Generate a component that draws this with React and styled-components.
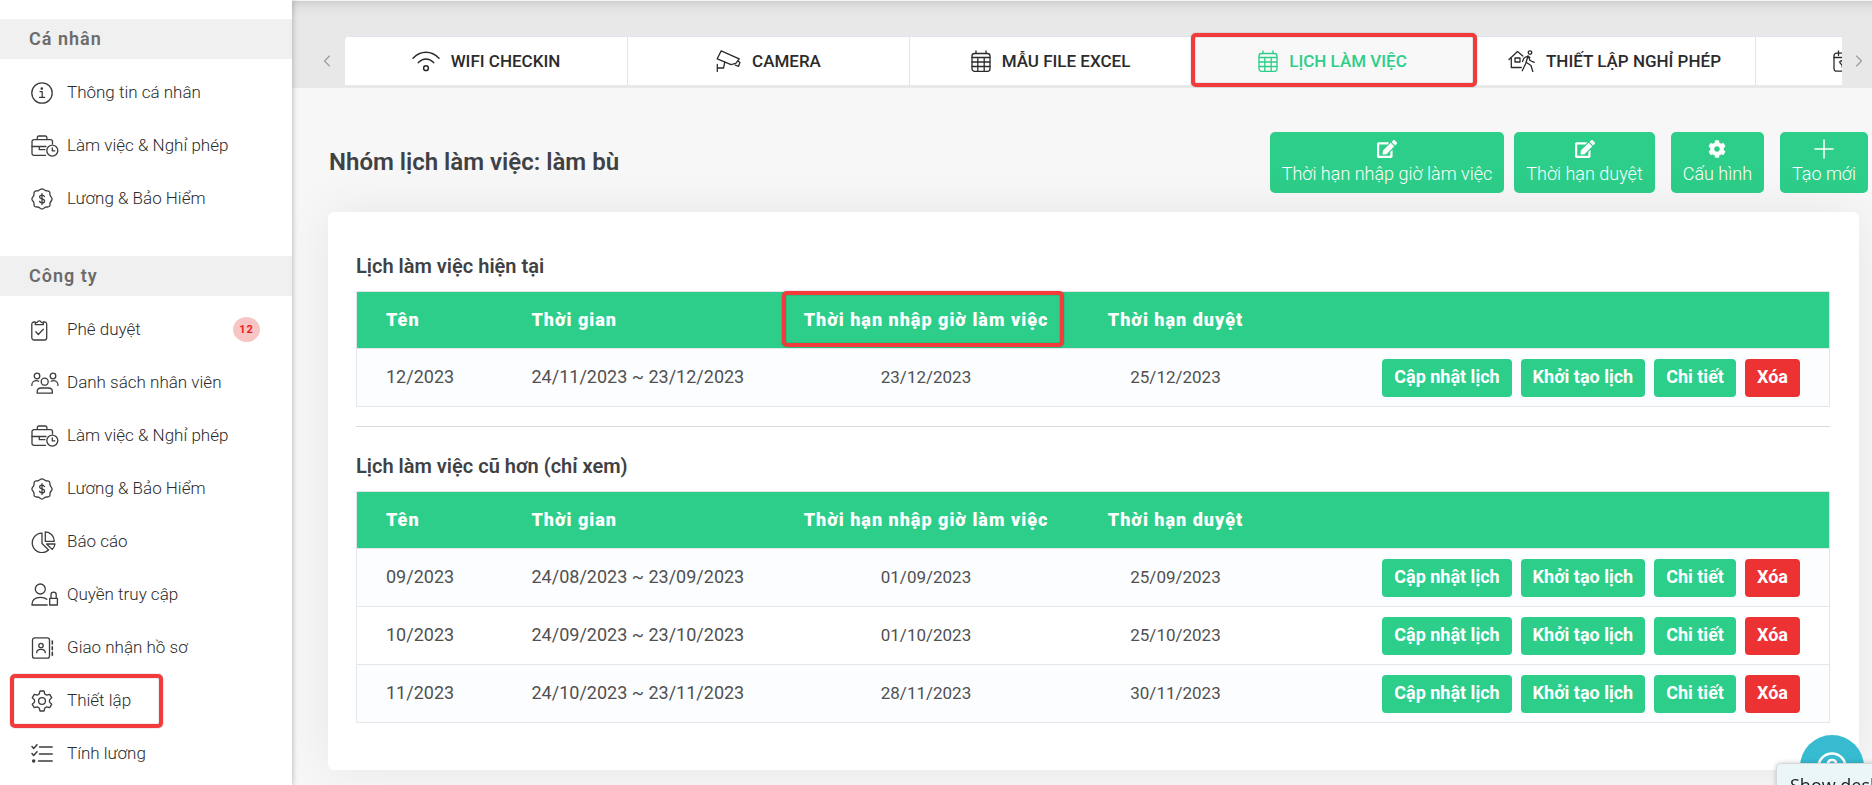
import React from "react";
import styled, { createGlobalStyle, css } from "styled-components";
import { FaEdit, FaCog } from "react-icons/fa";

const colors = {
  green: "#2dce89",
  red: "#ec3232",
  mark: "#f43b3b",
  line: "#e4e6eb",
  text: "#3f4144",
};

const GlobalStyle = createGlobalStyle`
  *, *::before, *::after { box-sizing: border-box; }
  body {
    margin: 0;
    overflow: hidden;
    background: #f7f7f7;
    color: ${colors.text};
    font-family: Roboto, "Liberation Sans", sans-serif;
  }
  button { font-family: inherit; cursor: pointer; }
`;

const frame = css`
  position: absolute;
  border: 4px solid ${colors.mark};
  border-radius: 5px;
  box-shadow: 0 0 1px rgba(0, 0, 0, 0.7), inset 0 0 1px rgba(0, 0, 0, 0.7);
  pointer-events: none;
  z-index: 2;
`;

// red frame around the element the guide points at
const marked = css`
  position: relative;
  &::after {
    content: "";
    inset: ${(props) => props.$inset || "-1px"};
    ${frame}
  }
`;

const Page = styled.div`
  display: flex;
  height: 100vh;
  overflow: hidden;
`;

const Sidebar = styled.nav`
  flex: 0 0 292px;
  position: relative;
  z-index: 1;
  padding-top: 19px;
  background: #fff;
  box-shadow: 0 0 6px rgba(0, 0, 0, 0.3);
`;

const Section = styled.section`
  margin-bottom: 31px;
`;

const SectionTitle = styled.h2`
  margin: 0 0 7px;
  padding: 0 29px;
  background: #f0f0f0;
  color: #6b6b6b;
  font-size: 18px;
  font-weight: 600;
  line-height: 40px;
  letter-spacing: 1px;
`;

const MenuLink = styled.a`
  display: flex;
  align-items: center;
  gap: 8px;
  height: 53px;
  padding: 0 32px 0 31px;
  color: #2b2b2b;
  font-size: 17px;
  font-weight: 300;
  text-decoration: none;
  ${(props) => props.$marked && marked}
`;

const MenuLabel = styled.span`
  padding-bottom: 2px;
`;

const IconSlot = styled.span`
  display: flex;
  flex: 0 0 28px;
  color: #3c3c3c;
`;

const Badge = styled.span`
  display: flex;
  align-items: center;
  justify-content: center;
  width: 27px;
  height: 25px;
  margin-left: auto;
  border-radius: 50%;
  background: #f8c5c5;
  color: #e81e1e;
  font-size: 11px;
  font-weight: 700;
  letter-spacing: 1px;
`;

const Main = styled.main`
  flex: 1;
  min-width: 0;
`;

const TabBar = styled.div`
  position: relative;
  display: flex;
  padding: 35px 0 3px 17px;
  border-top: 1px solid #f1f3f2;
  background: linear-gradient(#cfd1d0, #e1e1e1 7px, #e8e8e8 16px);
`;

const TabArrow = styled.button`
  display: flex;
  align-items: center;
  justify-content: center;
  flex: 0 0 ${(props) => props.$width};
  padding: ${(props) => props.$pad || "0"};
  border: 0;
  background: none;
  color: #999ca3;
`;

const TabList = styled.div`
  display: flex;
  flex: 1;
  min-width: 0;
  overflow: hidden;
  border-radius: 5px 0 0 0;
`;

const Tab = styled.button`
  display: flex;
  align-items: center;
  justify-content: ${(props) => (props.$iconOnly ? "flex-start" : "center")};
  gap: 11px;
  flex: 0 0 282px;
  height: 49px;
  padding: 0 0 0 ${(props) => (props.$iconOnly ? "77px" : "0")};
  border: 0;
  border-top: 1px solid #e0e4f0;
  background: ${(props) => (props.$active ? "#f8f8f8" : "#fff")};
  color: ${(props) => (props.$active ? colors.green : "#2b2b2b")};
  font-size: 17px;
  font-weight: 500;
  white-space: nowrap;

  & + & {
    border-left: 1px solid #e0e4f0;
  }
`;

const TabMark = styled.span`
  ${frame}
  top: 32px;
  left: 899px;
  width: 286px;
  height: 54px;
`;

const PageHead = styled.header`
  display: flex;
  align-items: center;
  justify-content: space-between;
  padding: 44px 4px 19px 37px;
`;

const PageTitle = styled.h1`
  margin: 0;
  padding-bottom: 2px;
  font-size: 24px;
  font-weight: 600;
  line-height: 32px;
`;

const Actions = styled.div`
  display: flex;
  gap: 16px;
`;

const ActionGroup = styled.div`
  display: flex;
  gap: 10px;
`;

const ActionButton = styled.button`
  display: flex;
  flex-direction: column;
  align-items: center;
  height: 61px;
  padding: 6px 12px 0;
  border: 0;
  border-radius: 5px;
  background: ${colors.green};
  color: #fff;
  font-size: 18px;
  font-weight: 300;
  line-height: 24px;
  white-space: nowrap;
`;

const ActionIcon = styled.span`
  display: flex;
  align-items: center;
  height: 22px;
  margin-bottom: 2px;
`;

const Card = styled.section`
  position: relative;
  margin: 0 13px 0 36px;
  padding: 42px 29px 47px 28px;
  border-radius: 6px;
  background: #fff;
  box-shadow: 0 0 50px rgba(0, 0, 0, 0.07);
`;

const GroupTitle = styled.h3`
  margin: 0 0 13px;
  font-size: 20px;
  font-weight: 600;
  line-height: 24px;
`;

const Divider = styled.hr`
  margin: 19px 0 27px;
  border: 0;
  border-top: 1px solid #dadada;
`;

const Table = styled.table`
  width: 100%;
  table-layout: fixed;
  border-collapse: collapse;
  border: 1px solid ${colors.line};
`;

const Col = styled.col`
  width: ${(props) => props.$width};
`;

const HeadCell = styled.th`
  height: 57px;
  padding: 0 0 2px ${(props) => props.$pad || "0"};
  background: ${colors.green};
  color: #fff;
  font-size: 18px;
  font-weight: 900;
  letter-spacing: 1px;
  text-align: ${(props) => props.$align || "left"};
  white-space: nowrap;
  ${(props) => props.$marked && marked}
`;

const Row = styled.tr`
  border-top: 1px solid ${colors.line};
  &:nth-child(odd) {
    background: #fcfdff;
  }
`;

const Cell = styled.td`
  height: 58px;
  padding: 0 0 2px ${(props) => props.$pad || "0"};
  color: #505050;
  font-size: ${(props) => (props.$align ? "17px" : "18px")};
  text-align: ${(props) => props.$align || "left"};
  white-space: nowrap;
`;

const ActionCell = styled.td`
  padding: 0 29px 0 0;
`;

const RowActions = styled.div`
  display: flex;
  justify-content: flex-end;
  gap: 9px;
`;

const RowButton = styled.button`
  height: 38px;
  padding: 0 12px 2px;
  border: 0;
  border-radius: 4px;
  background: ${(props) => (props.$danger ? colors.red : colors.green)};
  color: #fff;
  font-size: 18px;
  font-weight: 700;
`;

const HelpButton = styled.button`
  position: fixed;
  right: 8px;
  bottom: -14px;
  display: flex;
  align-items: center;
  justify-content: center;
  width: 64px;
  height: 64px;
  padding: 0;
  border: 0;
  border-radius: 50%;
  background: #36bbd1;
  color: #fff;
`;

const Tooltip = styled.div`
  position: fixed;
  left: calc(100% - 96px);
  top: calc(100% - 22px);
  padding: 8px 13px;
  border: 1px solid #d5d9da;
  border-radius: 5px;
  background: #eaf6f8;
  box-shadow: 0 0 5px rgba(0, 0, 0, 0.2);
  color: #1c1c1c;
  font-family: "Open Sans", "Noto Sans", sans-serif;
  font-size: 18px;
  line-height: 26px;
  white-space: nowrap;
`;

const Svg = ({ w = 22, h = 22, sw = 1.3, children }) => (
  <svg
    width={w}
    height={h}
    viewBox={`0 0 ${w} ${h}`}
    fill="none"
    stroke="currentColor"
    strokeWidth={sw}
    strokeLinecap="round"
    strokeLinejoin="round"
    aria-hidden="true"
  >
    {children}
  </svg>
);

const InfoIcon = () => (
  <Svg>
    <circle cx="11" cy="11" r="10.2" />
    <path d="M9 9.6h2.2v5.6M8.6 15.4h5" />
    <circle cx="10.8" cy="6.6" r="0.7" fill="currentColor" />
  </Svg>
);

const BriefcaseIcon = () => (
  <Svg w={28}>
    <path d="M14.5 20.4H3a2 2 0 0 1-2-2V6.6a2 2 0 0 1 2-2h16.5a2 2 0 0 1 2 2v2.2" />
    <path d="M6.3 4.4V2.5A1.5 1.5 0 0 1 7.8 1h6.6a1.5 1.5 0 0 1 1.5 1.5v1.9" />
    <path d="M1 11.5h14M8.3 11.7v3h5.5" />
    <circle cx="21.3" cy="15.6" r="5.5" />
    <path d="M21.3 12.8v3h2.5" />
  </Svg>
);

const MoneyIcon = () => (
  <Svg>
    <path d="M11 .9c1.5 0 2.3 1.4 3.6 1.8s2.9-.2 3.8.9.2 2.6.8 3.9S21.1 9.5 21.1 11s-1.4 2.3-1.9 3.5.2 2.9-.8 3.9-2.5.3-3.8.8S12.5 21.1 11 21.1s-2.3-1.4-3.6-1.9-2.8.2-3.8-.8-.3-2.6-.8-3.9S.9 12.5.9 11s1.4-2.2 1.9-3.5-.2-2.8.8-3.9 2.5-.5 3.8-.9S9.5.9 11 .9z" />
    <path d="M13.4 8.6c-.3-1-1.2-1.5-2.4-1.5-1.4 0-2.4.7-2.4 1.900 0 2.700 5 1.300 5 4 0 1.200-1.100 1.900-2.500 1.900-1.300 0-2.300-.6-2.600-1.600M11 5.600v10.800" />
  </Svg>
);

const ClipboardIcon = () => (
  <Svg w={17}>
    <path d="M4.3 3H3a2.2 2.2 0 0 0-2.2 2.2v13.6A2.2 2.2 0 0 0 3 21h10.5a2.2 2.2 0 0 0 2.2-2.2V5.2A2.2 2.2 0 0 0 13.500 3h-1.300" />
    <path d="M4.3 5.7V3.9l2-.6a2.1 2.1 0 0 1 4 0l2 .6v1.8z" />
    <path d="M4.8 12.8l2.5 2.7 5-5.2" />
  </Svg>
);

const TeamIcon = () => (
  <Svg w={28}>
    <circle cx="6" cy="4" r="2.8" />
    <circle cx="22" cy="4" r="2.8" />
    <circle cx="13.7" cy="9.7" r="3.5" />
    <path d="M.8 13.4c0-3 2-4.7 4.5-4.7.9 0 1.7.2 2.4.6M27 13.4c0-3-2-4.7-4.5-4.7-.9 0-1.7.2-2.4.6" />
    <path d="M6.2 21.2v-1.3c0-2.4 1.6-3.9 4-3.9h7.2c2.4 0 4 1.500 4 3.900v1.300z" />
  </Svg>
);

const PieIcon = () => (
  <Svg w={26}>
    <path d="M11 2.2A9.7 9.7 0 1 0 17.6 19L11 12.5z" />
    <path d="M14.3.9v9.400h9A9.300 9.300 0 0 0 14.300.9z" />
    <path d="M15.6 13h8.400a9 9 0 0 1-2.900 5.400z" />
  </Svg>
);

const UserLockIcon = () => (
  <Svg w={28} h={23}>
    <circle cx="9.3" cy="6" r="5" />
    <path d="M16.2 22H.9c0-5 3.5-7.7 8.6-7.7 2.7 0 4.9.7 6.3 2" />
    <path d="M18.7 15.3h7.7V22h-7.7zM20 15.2v-3.4a2.600 2.600 0 0 1 5.200 0v3.400" />
  </Svg>
);

const ContactIcon = () => (
  <Svg w={23}>
    <rect x="1.5" y=".9" width="17" height="20.2" rx="2.2" />
    <path d="M21.3 4v3M21.3 9.7v3M21.3 15.3v3" strokeWidth="1.6" />
    <circle cx="10" cy="8.5" r="2.2" />
    <path d="M5.7 15.7c0-2.3 1.4-3.3 4.3-3.3s4.3 1 4.3 3.300" />
  </Svg>
);

const GearIcon = () => (
  <Svg>
    <path d="M9 1h4l.8 3 1.9 1.1 3-.8 2 3.4-2.2 2.2v2.2l2.2 2.2-2 3.4-3-.8-1.9 1.1-.8 3H9l-.8-3-1.9-1.1-3 .8-2-3.4 2.2-2.2V9.9L1.3 7.7l2-3.4 3 .8L8.2 4z" />
    <circle cx="11" cy="11" r="3.4" />
  </Svg>
);

const ChecklistIcon = () => (
  <Svg sw={1.5}>
    <path d="M8.5 4h12.7M8.5 11h12.7M7.5 18h13.7M1 3.5l1.7 1.9L6 1.700M1 10.500l1.700 1.900L6 8.700" />
    <circle cx="2.7" cy="18" r="1" fill="currentColor" />
  </Svg>
);

const WifiIcon = () => (
  <Svg w={28} sw={1.5}>
    <path d="M1 8.2C8.5.3 19.5.3 27 8.2M6.3 12.6c4.7-4.8 10.7-4.8 15.4 0" />
    <circle cx="14" cy="18.2" r="2.4" />
  </Svg>
);

const CameraIcon = () => (
  <Svg w={25}>
    <path d="M5.2.9l18 8-3.4 4.5-4.7 1.2L1.2 8.8z" />
    <path d="M8.8 12.2L7.5 18H1.3M1.3 14.5v7M22 11.2l1.9 1.1-1.3 4-3.3-1.1" />
  </Svg>
);

const CalendarIcon = () => (
  <Svg w={20} sw={1.3}>
    <rect x="1" y="3.5" width="18" height="17.8" rx="2.5" />
    <path d="M5 .8v2.7M15 .8v2.7M1 7.5h18M1 12h18M1 16.5h18M6.8 7.5v13.5M13.2 7.5v13.5" />
  </Svg>
);

const HomeRunIcon = () => (
  <Svg w={27}>
    <path d="M1 9.5L9.5 1.6l5.3 4.5M3.3 8v9.5h10M7 8h5v4H7z" />
    <circle cx="22" cy="2.6" r="1.8" />
    <path d="M20 6l-4 2-1.5 3.5M20 6l-2.2 7.2-3.5 7.5M20.5 6.5l1.5 4 4.3 1.8M20 6l1.8 1.5M18.5 12.5l4.5 3 1.800 6" />
  </Svg>
);

const CalendarMoneyIcon = () => (
  <Svg w={22}>
    <rect x="1" y="3.2" width="19" height="18" rx="2.5" />
    <path d="M5.5.9v4.5M15.5.9v4.5M1 7.5h19M9.5 12.5c0-3-3.5-1.7-2.5.3s3 1.7 2 4" />
  </Svg>
);

const Chevron = ({ flip }) => (
  <Svg w={8} h={12} sw={1.1}>
    <path d={flip ? "M1.5 1l5 5-5 5" : "M6.5 1l-5 5 5 5"} />
  </Svg>
);

const PlusIcon = () => (
  <Svg w={20} h={20} sw={1.5}>
    <path d="M10 1v18M1 10h18" />
  </Svg>
);

const HelpIcon = () => (
  <Svg w={30} h={30} sw={2.5}>
    <circle cx="15" cy="15" r="13.5" />
    <path d="M11 11.5c.3-2.2 1.9-3.4 4-3.4 2.3 0 4 1.3 4 3.3 0 2.8-4 3-4 5.8M15 21v.5" />
  </Svg>
);

const personalMenu = [
  { icon: <InfoIcon />, label: "Thông tin cá nhân" },
  { icon: <BriefcaseIcon />, label: "Làm việc & Nghỉ phép" },
  { icon: <MoneyIcon />, label: "Lương & Bảo Hiểm" },
];

const companyMenu = [
  { icon: <ClipboardIcon />, label: "Phê duyệt", count: 12 },
  { icon: <TeamIcon />, label: "Danh sách nhân viên" },
  { icon: <BriefcaseIcon />, label: "Làm việc & Nghỉ phép" },
  { icon: <MoneyIcon />, label: "Lương & Bảo Hiểm" },
  { icon: <PieIcon />, label: "Báo cáo" },
  { icon: <UserLockIcon />, label: "Quyền truy cập" },
  { icon: <ContactIcon />, label: "Giao nhận hồ sơ" },
  { icon: <GearIcon />, label: "Thiết lập", marked: true },
  { icon: <ChecklistIcon />, label: "Tính lương" },
];

const tabs = [
  { id: "wifi", icon: <WifiIcon />, label: "WIFI CHECKIN" },
  { id: "camera", icon: <CameraIcon />, label: "CAMERA" },
  { id: "excel", icon: <CalendarIcon />, label: "MẪU FILE EXCEL" },
  {
    id: "schedule",
    icon: <CalendarIcon />,
    label: "LỊCH LÀM VIỆC",
    active: true,
  },
  { id: "leave", icon: <HomeRunIcon />, label: "THIẾT LẬP NGHỈ PHÉP" },
  { id: "more", icon: <CalendarMoneyIcon /> },
];

const currentRows = [
  {
    name: "12/2023",
    range: "24/11/2023 ~ 23/12/2023",
    input: "23/12/2023",
    approve: "25/12/2023",
  },
];

const olderRows = [
  {
    name: "09/2023",
    range: "24/08/2023 ~ 23/09/2023",
    input: "01/09/2023",
    approve: "25/09/2023",
  },
  {
    name: "10/2023",
    range: "24/09/2023 ~ 23/10/2023",
    input: "01/10/2023",
    approve: "25/10/2023",
  },
  {
    name: "11/2023",
    range: "24/10/2023 ~ 23/11/2023",
    input: "28/11/2023",
    approve: "30/11/2023",
  },
];

const Menu = ({ title, items }) => (
  <Section>
    <SectionTitle>{title}</SectionTitle>
    {items.map((item) => (
      <MenuLink
        key={item.label}
        href="#"
        $marked={item.marked}
        $inset="0 129px -1px 10px"
      >
        <IconSlot>{item.icon}</IconSlot>
        <MenuLabel>{item.label}</MenuLabel>
        {item.count && <Badge>{item.count}</Badge>}
      </MenuLink>
    ))}
  </Section>
);

const ScheduleTable = ({ rows, highlight }) => (
  <Table>
    <colgroup>
      <Col $width="151px" />
      <Col $width="275px" />
      <Col $width="287px" />
      <Col $width="212px" />
      <Col />
    </colgroup>
    <thead>
      <tr>
        <HeadCell $pad="29px">Tên</HeadCell>
        <HeadCell $pad="24px">Thời gian</HeadCell>
        <HeadCell $align="center" $marked={highlight} $inset="-1px 6px 1px -1px">
          Thời hạn nhập giờ làm việc
        </HeadCell>
        <HeadCell $align="center">Thời hạn duyệt</HeadCell>
        <HeadCell aria-label="Thao tác" />
      </tr>
    </thead>
    <tbody>
      {rows.map((row) => (
        <Row key={row.name}>
          <Cell $pad="29px">{row.name}</Cell>
          <Cell $pad="24px">{row.range}</Cell>
          <Cell $align="center">{row.input}</Cell>
          <Cell $align="center">{row.approve}</Cell>
          <ActionCell>
            <RowActions>
              <RowButton>Cập nhật lịch</RowButton>
              <RowButton>Khởi tạo lịch</RowButton>
              <RowButton>Chi tiết</RowButton>
              <RowButton $danger>Xóa</RowButton>
            </RowActions>
          </ActionCell>
        </Row>
      ))}
    </tbody>
  </Table>
);

const HeadAction = ({ icon, label }) => (
  <ActionButton>
    <ActionIcon>{icon}</ActionIcon>
    {label}
  </ActionButton>
);

const App = () => {
  return (
    <Page>
      <GlobalStyle />
      <Sidebar>
        <Menu title="Cá nhân" items={personalMenu} />
        <Menu title="Công ty" items={companyMenu} />
      </Sidebar>

      <Main>
        <TabBar>
          <TabArrow $width="36px" aria-label="Trước">
            <Chevron />
          </TabArrow>
          <TabList role="tablist">
            {tabs.map((tab) => (
              <Tab
                key={tab.id}
                role="tab"
                aria-selected={!!tab.active}
                aria-label={tab.label || "Khác"}
                $active={tab.active}
                $iconOnly={!tab.label}
              >
                {tab.icon}
                {tab.label}
              </Tab>
            ))}
          </TabList>
          <TabArrow $width="30px" $pad="0 0 0 4px" aria-label="Sau">
            <Chevron flip />
          </TabArrow>
          <TabMark />
        </TabBar>

        <PageHead>
          <PageTitle>Nhóm lịch làm việc: làm bù</PageTitle>
          <Actions>
            <ActionGroup>
              <HeadAction
                icon={<FaEdit size={20} />}
                label="Thời hạn nhập giờ làm việc"
              />
              <HeadAction icon={<FaEdit size={20} />} label="Thời hạn duyệt" />
            </ActionGroup>
            <HeadAction icon={<FaCog size={18} />} label="Cấu hình" />
            <HeadAction icon={<PlusIcon />} label="Tạo mới" />
          </Actions>
        </PageHead>

        <Card>
          <GroupTitle>Lịch làm việc hiện tại</GroupTitle>
          <ScheduleTable rows={currentRows} highlight />
          <Divider />
          <GroupTitle>Lịch làm việc cũ hơn (chỉ xem)</GroupTitle>
          <ScheduleTable rows={olderRows} />
        </Card>
      </Main>

      <HelpButton aria-label="Trợ giúp">
        <HelpIcon />
      </HelpButton>
      <Tooltip role="tooltip">Show desktop</Tooltip>
    </Page>
  );
};

export default App;
